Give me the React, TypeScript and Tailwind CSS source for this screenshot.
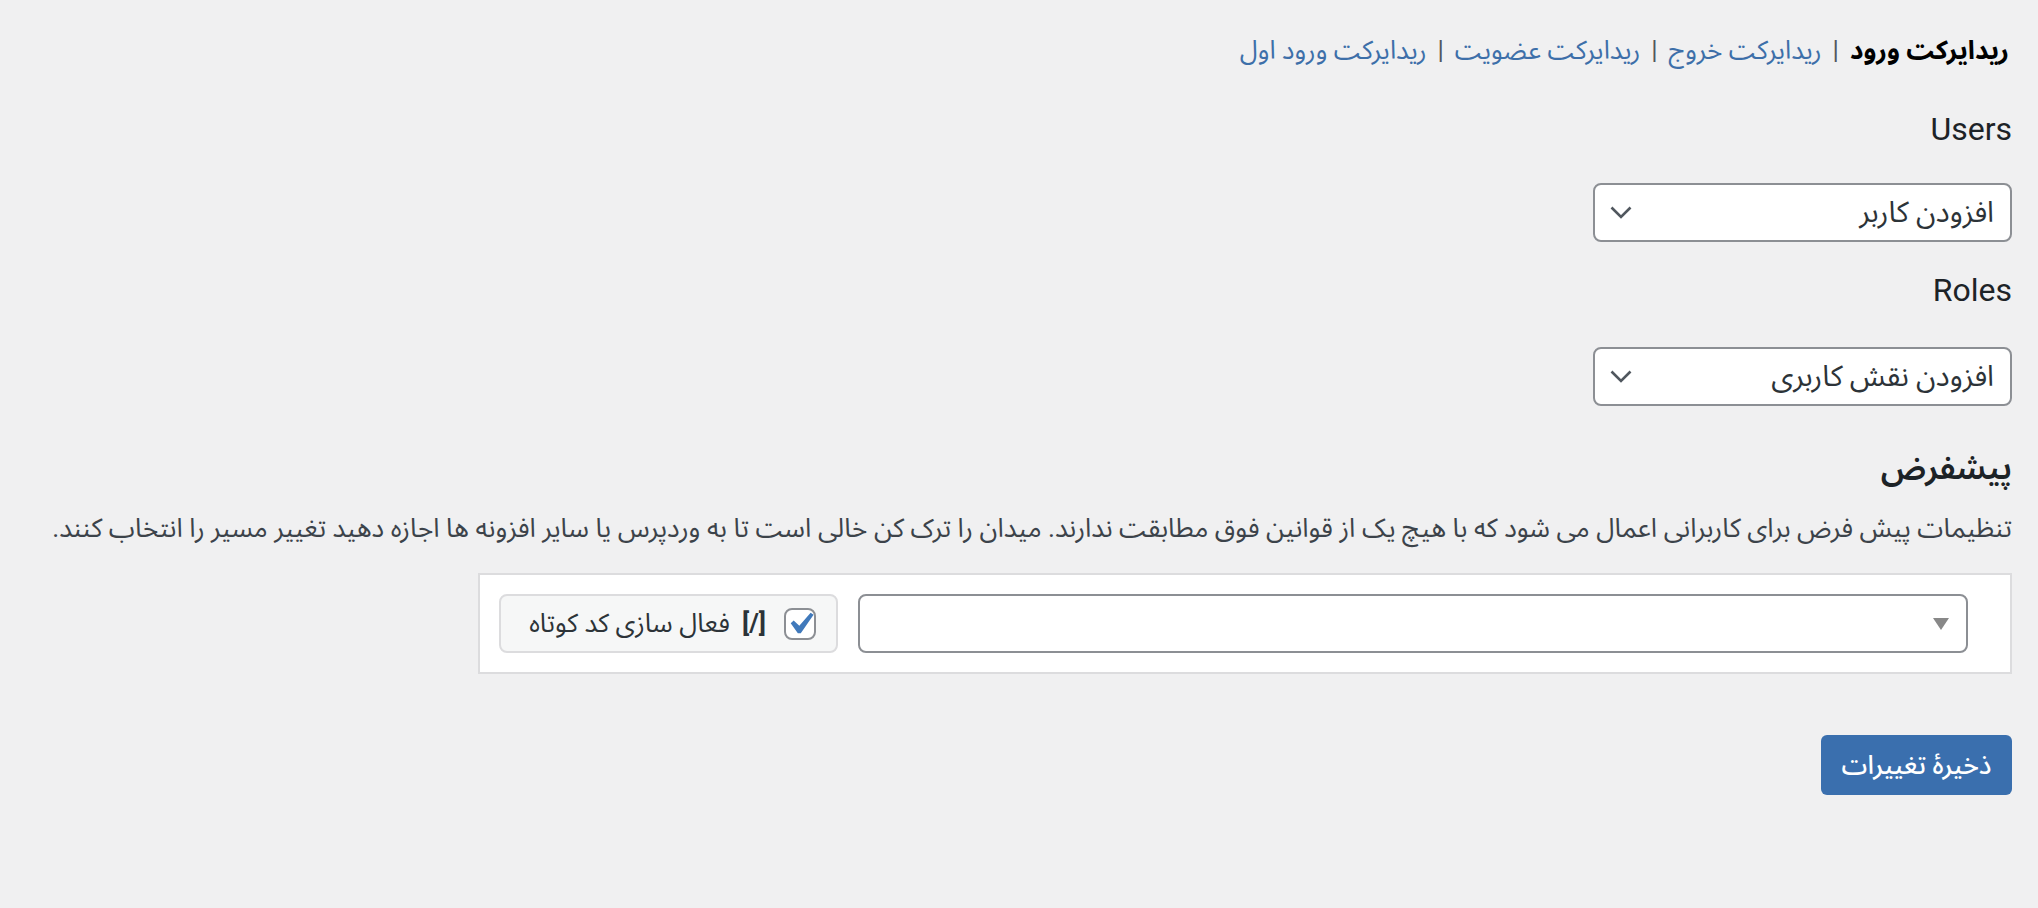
import React from 'react';

const tabs = [
  { label: 'ریدایرکت ورود', current: true },
  { label: 'ریدایرکت خروج', current: false },
  { label: 'ریدایرکت عضویت', current: false },
  { label: 'ریدایرکت ورود اول', current: false },
];

const Chevron = () => (
  <svg width="22" height="13" viewBox="0 0 22 13" fill="none">
    <polyline points="1.5,1.5 11,11 20.5,1.5" stroke="#50575e" strokeWidth="2.6" />
  </svg>
);

const WpSelect = ({ value }: { value: string }) => (
  <div className="flex h-[59px] w-[419px] items-center justify-between rounded-[8px] border-2 border-[#8c8f94] bg-white pr-[16px] pl-[15px] text-[29px] text-[#2c3338]">
    <span>{value}</span>
    <Chevron />
  </div>
);

const App = () => {
  return (
    <div
      dir="rtl"
      className="min-h-[908px] w-full bg-[#f0f0f1] pr-[26px] pl-[26px] font-[family-name:Roboto,'Noto_Sans_Arabic','DejaVu_Sans',sans-serif] text-[#1d2327]"
    >
      {/* tabs */}
      <ul className="flex items-center pt-[32px] pr-[3px] text-[26px] leading-[36px]">
        {tabs.map((tab, i) => (
          <li key={tab.label} className="flex items-center">
            {i > 0 && <span className="mx-[11px] text-[#50575e]">|</span>}
            <a className={tab.current ? 'font-bold text-black' : 'text-[#3d6fa9]'}>{tab.label}</a>
          </li>
        ))}
      </ul>

      <h2 className="mt-[41px] text-[32px] leading-[40px] font-normal">Users</h2>
      <div className="mt-[34px]">
        <WpSelect value="افزودن کاربر" />
      </div>

      <h2 className="mt-[28px] text-[32px] leading-[40px] font-normal">Roles</h2>
      <div className="mt-[37px]">
        <WpSelect value="افزودن نقش کاربری" />
      </div>

      <h2 className="mt-[42px] text-[33px] leading-[40px] font-semibold">پیشفرض</h2>
      <p className="mt-[22px] text-[26.4px] leading-[36px] whitespace-nowrap text-[#3c434a]">
        تنظیمات پیش فرض برای کاربرانی اعمال می شود که با هیچ یک از قوانین فوق مطابقت ندارند. میدان را ترک کن خالی است تا به وردپرس یا سایر افزونه ها اجازه دهید تغییر مسیر را انتخاب کنند.
      </p>

      {/* default rule row */}
      <div className="mt-[27px] flex w-[1534px] items-center gap-[20px] border-2 border-[#dcdcde] bg-white pt-[19px] pr-[42px] pb-[19px] pl-[19px]">
        <div className="flex h-[59px] w-[1110px] items-center rounded-[8px] border-2 border-[#8c8f94] bg-white pr-[17px]">
          <svg width="16" height="12" viewBox="0 0 16 12">
            <polygon points="0,0 16,0 8,12" fill="#888888" />
          </svg>
        </div>
        <label className="flex h-[59px] w-[339px] items-center rounded-[8px] border-2 border-[#dcdcde] bg-[#f6f7f7] pr-[20px] text-[26px] text-[#2c3338]">
          <span className="relative flex h-[32px] w-[32px] shrink-0 items-center justify-center rounded-[8px] border-2 border-[#8c8f94] bg-white">
            <svg
              className="absolute top-[-8px] left-[-8px]"
              width="44"
              height="44"
              viewBox="0 0 20 20"
            >
              <path d="M14.83 4.89l1.34.94-5.81 8.38H9.02L5.78 9.67l1.34-1.25 2.57 2.4z" fill="#4079bb" />
            </svg>
          </span>
          <span className="mr-[18px] font-bold text-[#2c3338]" dir="ltr">
            [/]
          </span>
          <span className="mr-[12px] whitespace-nowrap">فعال سازی کد کوتاه</span>
        </label>
      </div>

      <button className="mt-[61px] flex h-[60px] w-[191px] items-center justify-center rounded-[6px] bg-[#3a6fae] text-[26px] font-medium text-white">
        ذخیرهٔ تغییرات
      </button>
    </div>
  );
};

export default App;
